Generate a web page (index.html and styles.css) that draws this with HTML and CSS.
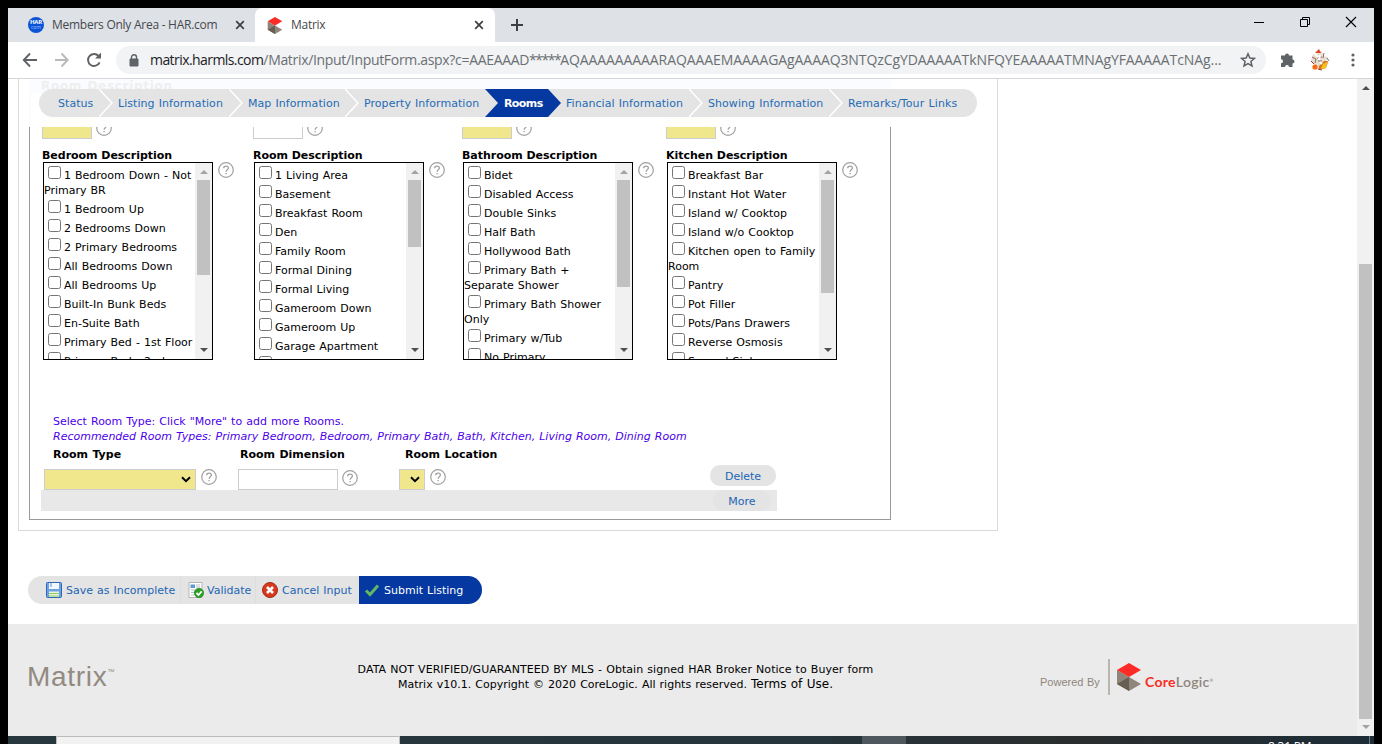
FILE: index.html
```
<!DOCTYPE html>
<html lang="en">
<head>
<meta charset="utf-8">
<title>Matrix</title>
<link rel="stylesheet" href="styles.css">
</head>
<body>
<svg class="defs" aria-hidden="true">
  <symbol id="help" viewBox="0 0 16 16"><circle cx="8" cy="8" r="7.3" fill="#fff" stroke="#a0a0a0" stroke-width="1.2"/><path d="M5.7 6.2C5.7 3.4 10.4 3.4 10.4 6.1C10.4 7.8 8.1 7.8 8.1 9.7M8.1 10.9V12.3" fill="none" stroke="#a0a0a0" stroke-width="1.3"/></symbol>
  <symbol id="chev" viewBox="0 0 14 28"><path d="M0 0L13 14L0 28" fill="none" stroke="#fff" stroke-width="1.5"/></symbol>
  <symbol id="close" viewBox="0 0 10 10"><path d="M1.2 1.2L8.8 8.8M8.8 1.2L1.2 8.8" stroke="#3c4043" stroke-width="1.7"/></symbol>
  <symbol id="cube" viewBox="0 0 24 28"><path d="M0 7L12 14L24 21L12 28L0 21Z" fill="#8f857b"/><path d="M12 14V28L0 21Z" fill="#665d53"/><path d="M12 0L24 7L12 14L0 7Z" fill="#fc2b26"/></symbol>
  <symbol id="caret" viewBox="0 0 10 7"><path d="M1 1.3L5 5.2L9 1.3" fill="none" stroke="#000" stroke-width="2"/></symbol>
</svg>
<div class="window">
  <header class="tabs">
    <div class="tab first">
      <span class="har"><b>HAR</b><i>com</i></span>
      <span class="tabname">Members Only Area - HAR.com</span>
      <svg class="x"><use href="#close"/></svg>
    </div>
    <div class="tab active">
      <svg class="fav"><use href="#cube"/></svg>
      <span class="tabname">Matrix</span>
      <svg class="x"><use href="#close"/></svg>
    </div>
    <svg class="plus" viewBox="0 0 12 12"><path d="M6 0V12M0 6H12" stroke="#3c4043" stroke-width="2"/></svg>
    <svg class="winctl" viewBox="0 0 104 14" fill="none" stroke="#000"><path d="M0 7.5H10"/><path d="M46.500 4.500h7v7h-7zM48.500 4V2.500h7v7H54"/><path d="M92 2L102 12M102 2L92 12" stroke-width="1.100"/></svg>
  </header>
  <div class="toolbar">
    <svg class="arrows" viewBox="0 0 84 18" fill="none" stroke-width="1.900"><path d="M15 9H2M8 2.500L1.800 9L8 15.500" stroke="#5f6368"/><path d="M33 9H46M39.500 2.500L45.700 9L39.500 15.500" stroke="#b8babc"/><path d="M77 5.500A6 6 0 1 0 77.600 11.300" stroke="#5f6368"/><path d="M79 1.500V7.500H73Z" fill="#5f6368"/></svg>
    <div class="omnibox">
      <svg class="lock" viewBox="0 0 10 13"><path d="M1 5H9V12H1Z" fill="#5f6368" stroke="#5f6368"/><path d="M2.500 5V3.200a2.500 2.500 0 0 1 5 0V5" fill="none" stroke="#5f6368" stroke-width="1.400"/></svg>
      <span class="url"><span class="u1">matrix.harmls.com</span><span class="u2">/Matrix/Input/InputForm.aspx?c=AAEAAAD</span><span class="u3">*****</span><span class="u4">AQAAAAAAAAARAQAAAEMAAAAGAgAAAAQ3NTQzCgYDAAAAATkNFQYEAAAAATMNAgYFAAAAATcNAg...</span></span>
      <svg class="star" viewBox="0 0 16 16"><path d="M8 1.800L9.800 6L14.400 6.400L10.900 9.400L12 13.900L8 11.500L4 13.900L5.100 9.400L1.600 6.400L6.200 6Z" fill="none" stroke="#5f6368" stroke-width="1.500"/></svg>
    </div>
    <svg class="puzzle" viewBox="0 0 16 16"><path d="M1 3.500H5a2 2 0 0 1 4 0H12.500V7.500a2 2 0 0 1 0 4V15H9a2 2 0 0 0-4 0H1V11.200a2 2 0 0 0 0-4Z" fill="#5f6368"/></svg>
    <svg class="avatar" viewBox="0 0 20 22"><path d="M3 5L6 7L8 3L12 2L13 7L18 8L16 12L19 14L15 18L10 20L5 20L4 14L1 12Z" fill="#e8ddd2"/><path d="M5 4L9 0L11 4Z" fill="#e4431b"/><path d="M14 12L18 12L16 19L9 21L9 17Z" fill="#d97719"/><path d="M13 15L17 13L16 19L11 20Z" fill="#f8c41c"/><circle cx="5" cy="18" r="2.600" fill="#fa6812"/><path d="M2 8L6 10L5 14M14 4L13 9M7 9L12 8M8 12H12M17 9L19 12" stroke="#8b6a58" fill="none"/><path d="M1 12L4 15M8 20L12 21" stroke="#9b3021"/><path d="M10 6L9 11M6 6L8 8M10 13L12 15" stroke="#fff" stroke-width="2"/></svg>
    <svg class="dots" viewBox="0 0 4 14" fill="#5f6368"><circle cx="2" cy="2" r="1.600"/><circle cx="2" cy="7" r="1.600"/><circle cx="2" cy="12" r="1.600"/></svg>
  </div>
  <div class="viewport">
    <main class="page">
      <div class="sticky">
        <div class="ghost">Room Description</div>
        <nav class="steps">
          <a class="s1">Status</a>
          <a class="s2"><svg><use href="#chev"/></svg>Listing Information</a>
          <a class="s3"><svg><use href="#chev"/></svg>Map Information</a>
          <a class="s4"><svg><use href="#chev"/></svg>Property Information</a>
          <a class="s5">Rooms</a>
          <a class="s6">Financial Information</a>
          <a class="s7"><svg><use href="#chev"/></svg>Showing Information</a>
          <a class="s8"><svg><use href="#chev"/></svg>Remarks/Tour Links</a>
        </nav>
      </div>
      <section class="panel">
        <div class="form">
          <div class="cols">
            <div class="col">
              <div class="num"><span class="box req"></span><svg class="help"><use href="#help"/></svg></div>
              <h3>Bedroom Description</h3>
              <div class="pick"><div class="list"><div class="items">
                <div><i></i>1 Bedroom Down - Not<br>Primary BR</div><div><i></i>1 Bedroom Up</div><div><i></i>2 Bedrooms Down</div><div><i></i>2 Primary Bedrooms</div><div><i></i>All Bedrooms Down</div><div><i></i>All Bedrooms Up</div><div><i></i>Built-In Bunk Beds</div><div><i></i>En-Suite Bath</div><div><i></i>Primary Bed - 1st Floor</div><div><i></i>Primary Bed - 2nd</div>
              </div><div class="bar"><b class="up"></b><span class="thumb h1"></span><b class="down"></b></div></div><svg class="help"><use href="#help"/></svg></div>
            </div>
            <div class="col">
              <div class="num"><span class="box"></span><svg class="help"><use href="#help"/></svg></div>
              <h3>Room Description</h3>
              <div class="pick"><div class="list"><div class="items">
                <div><i></i>1 Living Area</div><div><i></i>Basement</div><div><i></i>Breakfast Room</div><div><i></i>Den</div><div><i></i>Family Room</div><div><i></i>Formal Dining</div><div><i></i>Formal Living</div><div><i></i>Gameroom Down</div><div><i></i>Gameroom Up</div><div><i></i>Garage Apartment</div><div><i></i></div>
              </div><div class="bar"><b class="up"></b><span class="thumb h2"></span><b class="down"></b></div></div><svg class="help"><use href="#help"/></svg></div>
            </div>
            <div class="col">
              <div class="num"><span class="box req"></span><svg class="help"><use href="#help"/></svg></div>
              <h3>Bathroom Description</h3>
              <div class="pick"><div class="list"><div class="items">
                <div><i></i>Bidet</div><div><i></i>Disabled Access</div><div><i></i>Double Sinks</div><div><i></i>Half Bath</div><div><i></i>Hollywood Bath</div><div><i></i>Primary Bath +<br>Separate Shower</div><div><i></i>Primary Bath Shower<br>Only</div><div><i></i>Primary w/Tub</div><div><i></i>No Primary</div>
              </div><div class="bar"><b class="up"></b><span class="thumb h3"></span><b class="down"></b></div></div><svg class="help"><use href="#help"/></svg></div>
            </div>
            <div class="col">
              <div class="num"><span class="box req"></span><svg class="help"><use href="#help"/></svg></div>
              <h3>Kitchen Description</h3>
              <div class="pick"><div class="list"><div class="items">
                <div><i></i>Breakfast Bar</div><div><i></i>Instant Hot Water</div><div><i></i>Island w/ Cooktop</div><div><i></i>Island w/o Cooktop</div><div><i></i>Kitchen open to Family<br>Room</div><div><i></i>Pantry</div><div><i></i>Pot Filler</div><div><i></i>Pots/Pans Drawers</div><div><i></i>Reverse Osmosis</div><div><i></i>Second Sink</div>
              </div><div class="bar"><b class="up"></b><span class="thumb h4"></span><b class="down"></b></div></div><svg class="help"><use href="#help"/></svg></div>
            </div>
          </div>
          <div class="note"><p>Select Room Type: Click "More" to add more Rooms.</p><p class="it">Recommended Room Types: Primary Bedroom, Bedroom, Primary Bath, Bath, Kitchen, Living Room, Dining Room</p></div>
          <div class="heads"><b>Room Type</b><b>Room Dimension</b><b>Room Location</b></div>
          <div class="fields">
            <span class="field req f1"><svg class="caret"><use href="#caret"/></svg></span><svg class="help g1"><use href="#help"/></svg>
            <span class="field f2"></span><svg class="help g2"><use href="#help"/></svg>
            <span class="field req f3"><svg class="caret"><use href="#caret"/></svg></span><svg class="help g3"><use href="#help"/></svg>
            <a class="delete">Delete</a>
          </div>
          <div class="morebar"><a>More</a></div>
        </div>
      </section>
      <div class="actions">
        <a class="a1"><svg viewBox="0 0 16 16"><rect x=".5" y=".5" width="15" height="15" rx="1" fill="#6fa0e2" stroke="#2c66b8"/><path d="M3 1H13V7H3Z" fill="#f4f8fd"/><path d="M5 1V5" stroke="#5d8cc8"/><path d="M3 9.500H13V15H3Z" fill="#e9f4df"/><path d="M3 11.500H13M3 14H13" stroke="#8fca65" stroke-width="1.200"/></svg>Save as Incomplete</a>
        <a class="a2"><svg viewBox="0 0 16 16"><path d="M1 .5H14V15.500H1Z" fill="#fff" stroke="#b5b5b5"/><path d="M2.500 2.500H7V6H2.500Z" fill="#5a9bd5"/><path d="M8 3H12M8 5H12M3 8H8M3 10.500H7M3 13H6" stroke="#b9c0c5"/><circle cx="11" cy="11" r="4.700" fill="#27a023" stroke="#15831a" stroke-width=".6"/><path d="M8.500 11L10.500 13L13.700 9.300" fill="none" stroke="#fff" stroke-width="1.800"/></svg>Validate</a>
        <a class="a3"><svg viewBox="0 0 16 16"><circle cx="8" cy="8" r="7.500" fill="#d63a1d" stroke="#a52a16"/><path d="M5 5L11 11M11 5L5 11" stroke="#fff" stroke-width="2.600"/></svg>Cancel Input</a>
        <a class="a4"><svg viewBox="0 0 16 16"><path d="M2 8.500L6 12.500L14 3.500" fill="none" stroke="#60b861" stroke-width="3"/></svg>Submit Listing</a>
      </div>
      <footer class="foot">
        <div class="brand">Matrix<sup>™</sup></div>
        <div class="legal"><p class="l1">DATA NOT VERIFIED/GUARANTEED BY MLS - Obtain signed HAR Broker Notice to Buyer form</p><p class="l2">Matrix v10.1. Copyright © 2020 CoreLogic. All rights reserved. <span>Terms of Use.</span></p></div>
        <div class="powered"><span class="pb">Powered By</span><span class="rule"></span><svg><use href="#cube"/></svg><span class="cl"><b>Core</b>Logic<sup>®</sup></span></div>
      </footer>
    </main>
    <div class="scroll"><b class="up dark"></b><span class="mainthumb"></span><b class="down light"></b></div>
  </div>
  <div class="taskbar"><span class="search"></span><span class="task"></span><span class="clock">8:31 PM</span><span class="peek"></span></div>
</div>
</body>
</html>
```
FILE: styles.css
```
* { box-sizing: border-box; }
body { margin: 0; background: #000; height: 744px; overflow: hidden; font: 11px/15px "DejaVu Sans", Verdana, sans-serif; color: #000; }
p, h3 { margin: 0; }
svg { display: block; flex: none; }
.defs { position: absolute; width: 0; height: 0; }
.window { width: 1366px; height: 736px; margin: 8px 8px 0; background: #fff; overflow: hidden; display: flex; flex-direction: column; white-space: nowrap; }

/* browser chrome */
.tabs { height: 34px; flex: none; background: #dee1e6; display: flex; font: 12px/34px "Open Sans", sans-serif; color: #45494d; }
.tab { display: flex; align-items: center; height: 34px; }
.tabname { letter-spacing: -.26px; }
.first { width: 247px; padding-left: 20px; border-bottom-right-radius: 6px; }
.active { width: 240px; padding-left: 12px; background: #fff; border-radius: 7px 7px 0 0; }
.tab .x { width: 10px; height: 10px; margin: 0 11px 0 auto; }
.first .x { margin-right: 10px; }
.har { width: 16px; height: 16px; border-radius: 50%; background: #0b54d8; color: #fff; font: 6px/6px "Open Sans", sans-serif; text-align: center; padding-top: 3px; margin-right: 8px; }
.har b, .har i { display: block; font-style: normal; line-height: 5px; }
.har b { letter-spacing: -.2px; }
.har i { color: #9fc0f8; font-size: 5px; }
.fav { width: 16px; height: 17px; margin-right: 8px; }
.plus { width: 12px; height: 12px; margin: 11px 0 0 16px; }
.winctl { width: 104px; height: 14px; margin: 7px 0 0 731px; }
.toolbar { height: 37px; flex: none; display: flex; align-items: center; border-bottom: 1px solid #d4d6da; }
.arrows { width: 84px; height: 18px; margin-left: 14px; }
.omnibox { display: flex; align-items: center; width: 1150px; height: 28px; margin-left: 10px; background: #f1f3f4; border-radius: 14px; }
.lock { width: 10px; height: 13px; margin-left: 13px; }
.url { width: 1073px; margin-left: 11px; font: 14px/28px "Open Sans", sans-serif; color: #6b6f73; display: flex; }
.u1 { color: #202124; letter-spacing: -.57px; }
.u2 { letter-spacing: -.32px; }
.u3 { letter-spacing: -1.5px; }
.u4 { letter-spacing: -.09px; }
.star { width: 16px; height: 16px; margin-left: 17px; }
.puzzle { width: 16px; height: 16px; margin-left: 14px; }
.avatar { width: 20px; height: 22px; margin-left: 14px; }
.dots { width: 4px; height: 14px; margin-left: 21px; }

/* page */
.viewport { height: 657px; flex: none; display: flex; }
.page { width: 1349px; position: relative; word-spacing: .55px; }
.sticky { position: absolute; left: 20px; top: 0; width: 950px; height: 48px; background: rgba(255,255,255,.95); }
.ghost { margin-left: 1px; padding-left: 12px; width: 862px; height: 15px; background: #fbfcff; color: #efefef; font-weight: bold; font-size: 12px; line-height: 14px; letter-spacing: .7px; overflow: hidden; }
.steps { display: flex; margin: -5px 0 0 11px; width: 938px; height: 28px; border-radius: 14px; background: #e4e4e4; position: relative; overflow: hidden; line-height: 30px; letter-spacing: .05px; color: #1f6bb5; }
.steps a { position: relative; padding-left: 19px; height: 28px; flex: none; }
.steps a svg { position: absolute; left: 0; top: 0; width: 14px; height: 28px; }
.s1 { width: 60px; }
.s2 { width: 130px; }
.s3 { width: 116px; }
.s4 { width: 140px; }
.steps .s5 { width: 76px; margin-right: -13px; z-index: 1; background: #0538a0; color: #fff; font-weight: bold; letter-spacing: -.7px; clip-path: polygon(0 0, 63px 0, 100% 50%, 63px 100%, 0 100%, 13px 50%); letter-spacing: -.7px; }
.steps .s5 { letter-spacing: -.6px; }
.steps .s6 { width: 141px; padding-left: 18px; }
.s7 { width: 140px; }
.s8 { width: 148px; letter-spacing: .13px; }
.panel { width: 980px; height: 452px; margin-left: 10px; padding-left: 10px; border: 1px solid #dadada; border-top: 0; }
.form { width: 862px; height: 441px; border: 1px solid #999; border-top: 0; }
.cols { display: grid; grid-template-columns: 211px 209px 204px 1fr; padding-left: 12px; }
.num { display: flex; height: 69px; padding-top: 38px; }
.box { width: 50px; height: 22px; border: 1px solid #ccc; }
.req { background: #f0e68c; }
.help { width: 16px; height: 16px; }
.num .help { margin: 3px 0 0 4px; }
h3 { font-size: 11px; line-height: 16px; height: 14px; word-spacing: 0; letter-spacing: -.03px; }
.pick { display: flex; padding-left: 1px; }
.pick .help { margin-left: 5px; }
.list { width: 170px; height: 198px; border: 1px solid #000; display: flex; overflow: hidden; }
.items { width: 151px; height: 196px; padding-top: 1px; overflow: hidden; flex: none; }
.items div { padding-top: 4px; line-height: 15px; }
.items i { display: inline-block; width: 13px; height: 13px; margin: -4px 3px 0 4px; border: 1px solid #767676; border-radius: 2.5px; background: #fff; }
.bar { width: 17px; flex: none; background: #f1f1f1; display: flex; flex-direction: column; align-items: center; }
.up, .down { border: 4px solid transparent; width: 8px; height: 4px; flex: none; }
.up { border-top: 0; border-bottom-color: #a3a3a3; margin: 7px 0 6px; }
.down { border-bottom: 0; border-top-color: #505050; margin: auto 0 7px; }
.thumb { width: 13px; background: #c1c1c1; }
.h1 { height: 95px; }
.h2 { height: 67px; }
.h3 { height: 107px; }
.h4 { height: 113px; }
.note { margin: 54px 0 0 23px; color: #4b00eb; line-height: 15px; }
.it { font-style: italic; }
.heads { display: flex; margin: 2px 0 0 23px; height: 16px; line-height: 18px; }
.heads b:nth-child(1) { width: 187px; }
.heads b:nth-child(2) { width: 165px; }
.fields { display: flex; height: 28px; padding: 7px 0 0 14px; }
.field { height: 21px; border: 1px solid #ccc; display: flex; justify-content: flex-end; }
.caret { width: 10px; height: 7px; margin: 6px 4px 0 0; }
.f1 { width: 152px; }
.f2 { width: 100px; margin-left: 21px; }
.f3 { width: 26px; margin-left: 41px; }
.g1, .g3 { margin-left: 5px; }
.g2 { margin: 1px 0 0 4px; }
.delete { width: 66px; height: 21px; margin: -4px 0 0 264px; border-radius: 10px; background: #e4e4e4; color: #1c64b4; text-align: center; line-height: 23px; }
.morebar { width: 736px; height: 21px; margin-left: 11px; background: #e8e8e8; color: #1c64b4; display: flex; justify-content: flex-end; }
.morebar a { width: 58px; height: 21px; margin-right: 6px; background: #e4e4e4; border-radius: 10px; text-align: center; line-height: 23px; }
.actions { display: flex; width: 454px; height: 28px; margin: 45px 0 0 20px; border-radius: 14px; overflow: hidden; background: #e4e4e4; color: #1c64b4; line-height: 30px; }
.actions a { display: flex; align-items: flex-start; }
.actions svg { width: 16px; height: 16px; margin: 6px 4px 0 0; }
.a1 { width: 153px; padding-left: 18px; }
.a2 { width: 75px; padding-left: 7px; }
.actions .a2 svg { margin-right: 3px; }
.a3 { width: 103px; padding-left: 6px; }
.a1, .a2 { border-right: 1px solid #dedede; }
.a4 { width: 123px; padding-left: 5px; background: #0538a0; color: #fff; }
.foot { height: 112px; margin-top: 20px; background: #ebebeb; display: flex; }
.brand { width: 349px; padding: 35px 0 0 19px; font: 28px/36px "Liberation Sans", sans-serif; letter-spacing: .7px; color: #928a82; }
.brand sup { font-size: 7px; line-height: 0; vertical-align: 12px; letter-spacing: 0; }
.legal { width: 517px; padding-top: 38px; display: flex; flex-direction: column; align-items: center; }
.l1 { letter-spacing: .05px; }
.l2 span { font-size: 12px; }
.powered { display: flex; margin: 35px 0 0 166px; height: 36px; font-family: "Liberation Sans", sans-serif; color: #8f857b; }
.pb { width: 68px; line-height: 46px; }
.rule { width: 2px; background: #bbb5af; }
.powered svg { width: 24px; height: 28px; margin: 4px 4px 0 7px; }
.cl { font: 600 14px/45px Lato, sans-serif; letter-spacing: .3px; }
.cl b { color: #fc2b26; font-weight: bold; }
.cl sup { font-size: 4px; line-height: 0; vertical-align: 5px; }
.scroll { width: 17px; background: #f1f1f1; display: flex; flex-direction: column; align-items: center; }
.dark { border-bottom-color: #505050; }
.mainthumb { width: 13px; height: 455px; margin: 168px 0 0; background: #c1c1c1; }
.light { border-top-color: #a3a3a3; margin: 6px 0 0; }
.taskbar { height: 8px; flex: none; display: flex; background: linear-gradient(90deg, #28363e, #26343b 60%, #2a2d2d 78%, #1d2d38); overflow: hidden; }
.search { width: 344px; margin-left: 48px; background: #f2f2f2; border: 1px solid #bbb; border-bottom: 0; }
.task { width: 44px; margin-left: 462px; background: #4f575e; }
.clock { width: 98px; margin: 3px 0 0 362px; color: #fff; font: 12px/16px "Open Sans", sans-serif; letter-spacing: -.2px; height: 16px; }
.peek { width: 1px; margin-left: 3px; background: #6c777e; }
```
